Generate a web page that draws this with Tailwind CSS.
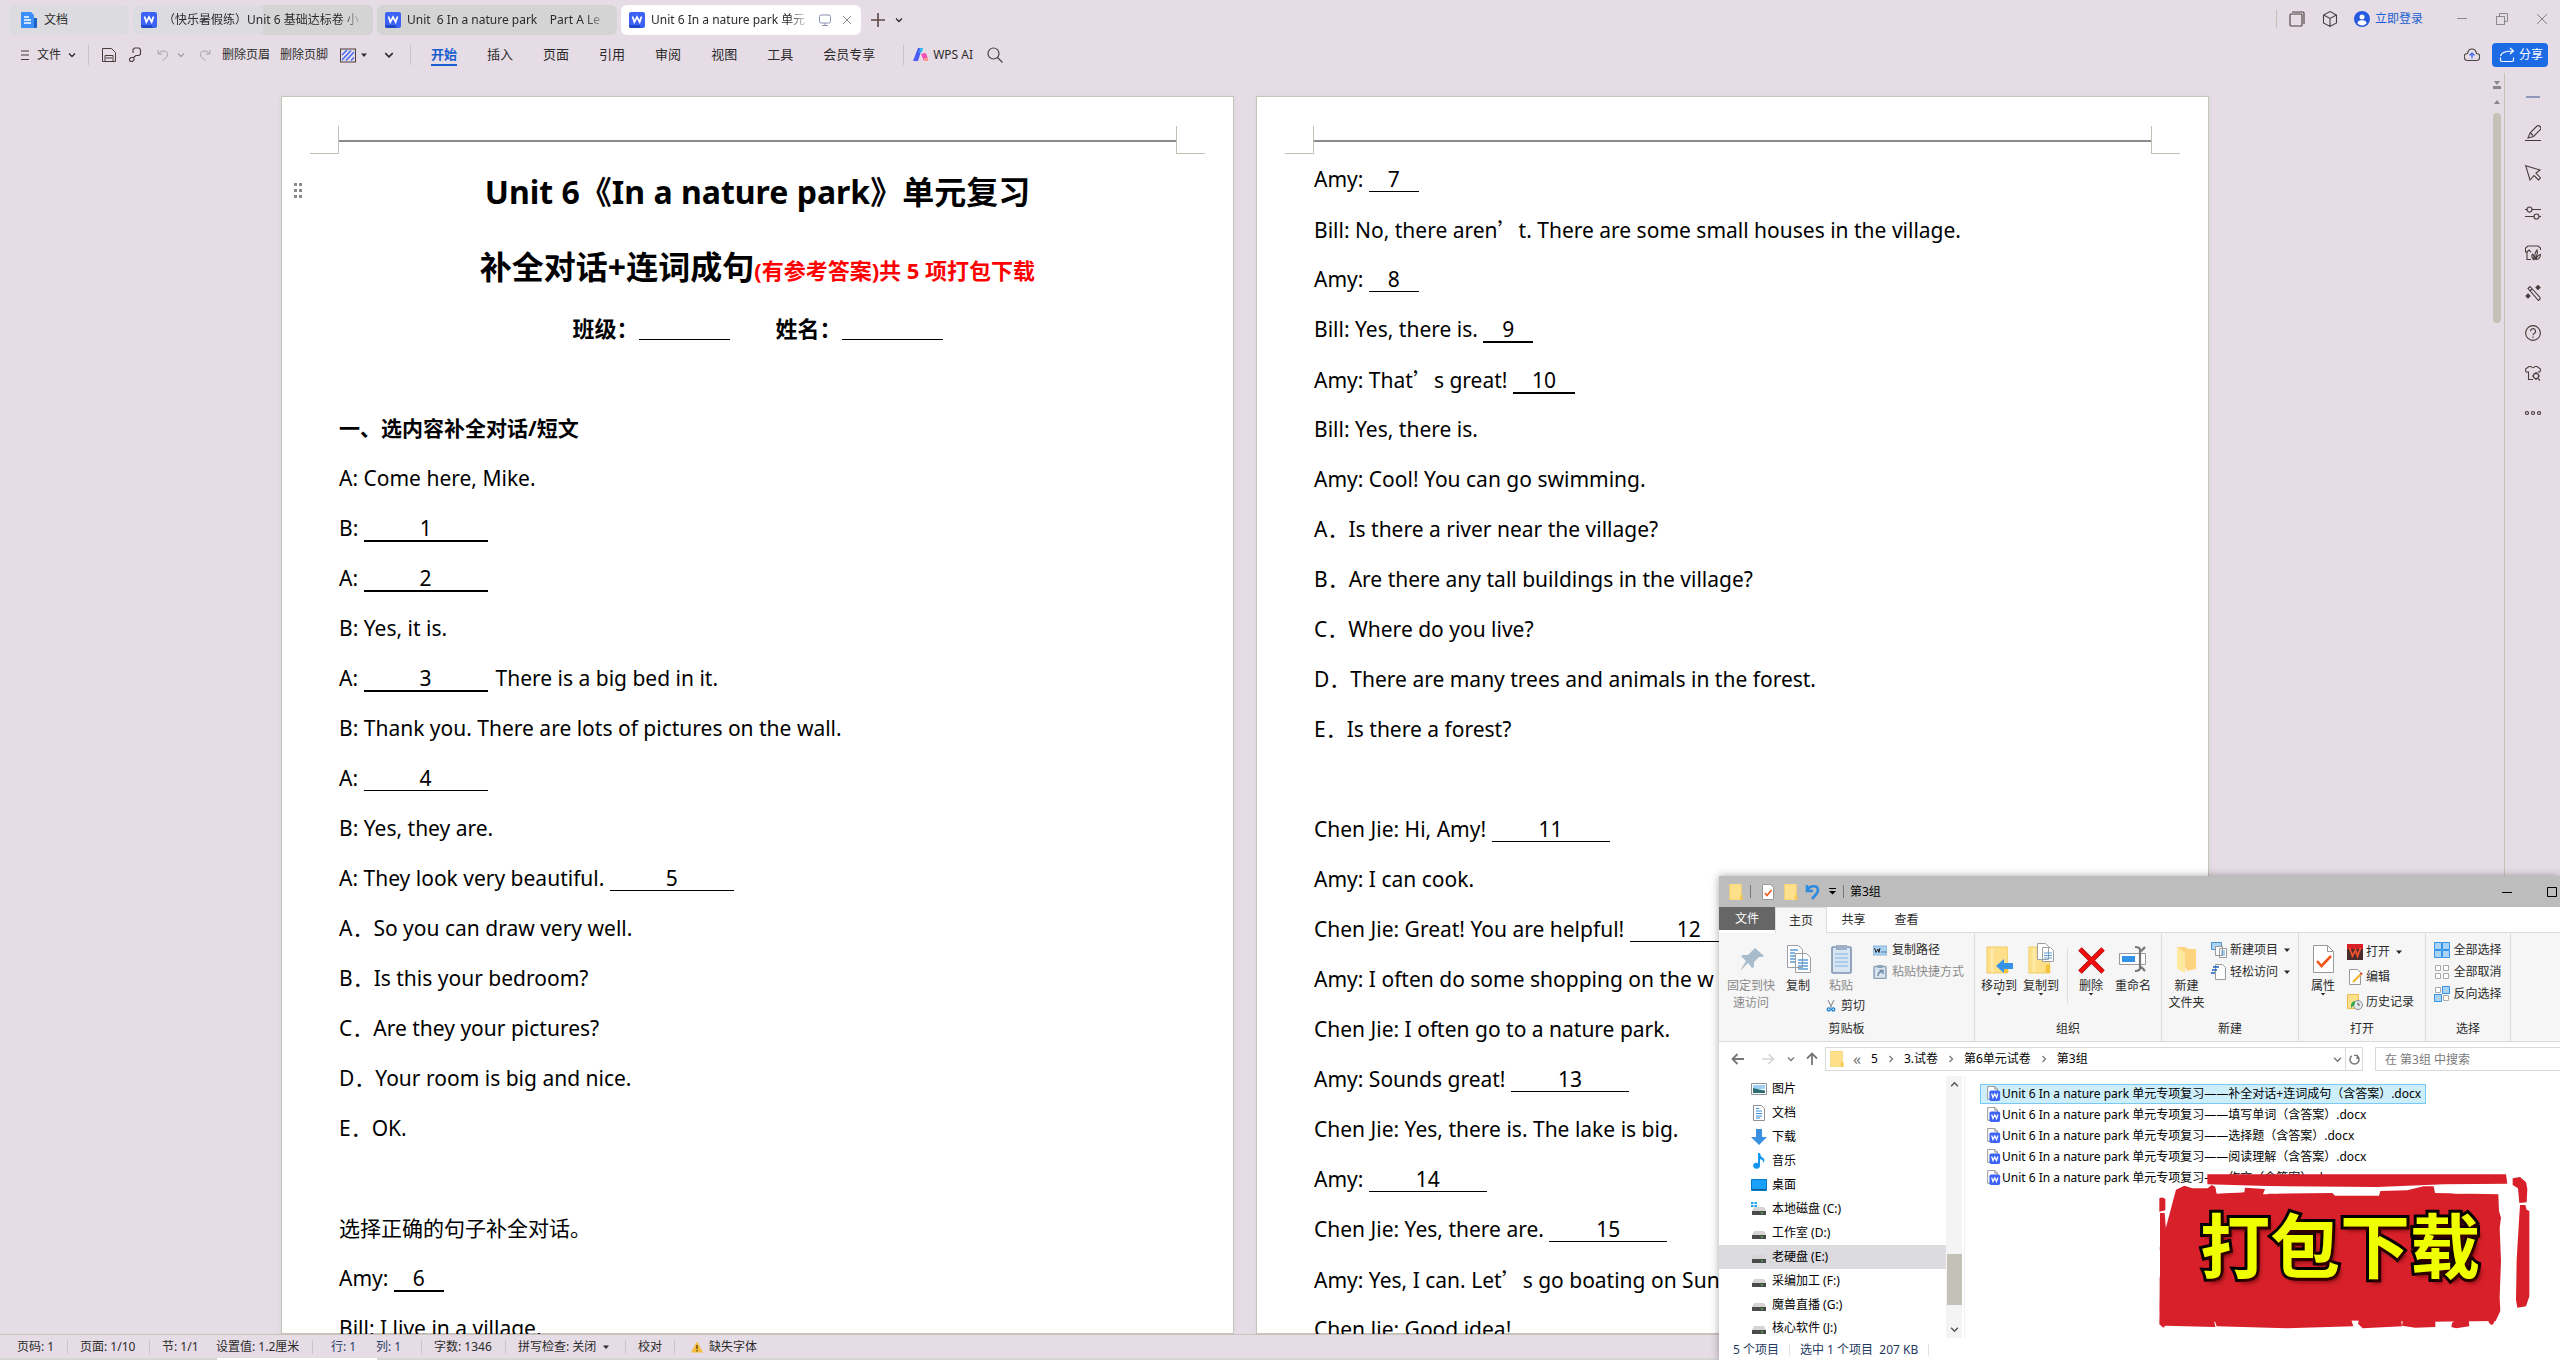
<!DOCTYPE html>
<html lang="zh-CN">
<head>
<meta charset="utf-8">
<title>Unit 6 In a nature park 单元专项复习</title>
<script src="https://cdn.jsdelivr.net/npm/@tailwindcss/browser@4"></script>
</head>
<body class="relative flex h-screen flex-col overflow-hidden bg-[#e6dce5] font-['Noto_Sans','Noto_Sans_CJK_SC',sans-serif] text-xs text-[#2b2b2b]">

<!-- icon sprite -->
<svg class="hidden" aria-hidden="true">
  <symbol id="wdoc" viewBox="0 0 16 16"><path d="M2 0h12a2 2 0 0 1 2 2v12a2 2 0 0 1-2 2H2a2 2 0 0 1-2-2V2a2 2 0 0 1 2-2z" fill="#3c63f5"/><path d="M0 13h10l2 3H2a2 2 0 0 1-2-2z" fill="#1f49c9"/><path d="M3.500 4.500 5.300 10 8 5l2.700 5 1.800-5.500" fill="none" stroke="#fff" stroke-width="1.700"/></symbol>
  <symbol id="chev" viewBox="0 0 8 8"><path d="M1 2.500 4 5.500 7 2.500" fill="none" stroke="currentColor" stroke-width="1.300"/></symbol>
  <symbol id="caret" viewBox="0 0 8 8"><path d="M1 2.500h6L4 6z" fill="currentColor"/></symbol>
  <symbol id="folder" viewBox="0 0 16 16"><path d="M1.500 0h12v16h-12z" fill="#ffe08a" stroke="#f3cd62" stroke-width=".6"/><path d="M12 11h2.500v5H12z" fill="#f6c94c"/></symbol>
  <symbol id="wfile" viewBox="0 0 16 18"><path d="M2 .500h8l3 3V15H2z" fill="#fff" stroke="#8d8d8d"/><path d="M10 .500v3h3" fill="none" stroke="#8d8d8d"/><rect x="4" y="5" width="12" height="12" rx="2" fill="#3c63f5"/><path d="M6.500 8.500 8 13l2-4 2 4 1.500-4.500" fill="none" stroke="#fff" stroke-width="1.400"/></symbol>
  <symbol id="drive" viewBox="0 0 16 16"><path d="M3 6h10l2 4H1z" fill="#d4d4d4"/><path d="M1 10h14v4H1z" fill="#4a4a4a"/><path d="M10 11.500h2v1h-2z" fill="#4fe04f"/></symbol>
  <symbol id="bigfolder" viewBox="0 0 28 30"><path d="M1 1h22v28H1z" fill="#ffe08a" stroke="#f0cb62"/><path d="M5 2h3v26H5z" fill="#ffeaa8"/><path d="M19 20h5v9h-5z" fill="#f5c33f"/></symbol>
</svg>

<!-- tabs -->
<header class="flex h-[38px] shrink-0 items-start pl-[9px] pr-3 pt-[5px]">
  <nav class="flex gap-1" aria-label="打开的文档">
    <button class="flex h-[30px] w-[120px] items-center gap-[7px] rounded-md bg-[#dcdce0] pl-3">
      <svg class="size-4" viewBox="0 0 16 16"><path d="M1 0h9l3 3v13H1a1 1 0 0 1-1-1V1a1 1 0 0 1 1-1z" fill="#3e8ef7"/><path d="M13 6h3v9a1 1 0 0 1-1 1h-2z" fill="#1e63c8"/><path d="M3 5h5M3 8h7M3 11h7" stroke="#fff" stroke-width="1.400"/></svg>文档</button>
    <button class="flex h-[30px] w-[240px] items-center gap-[6px] rounded-md bg-[linear-gradient(90deg,#dcdce0_54%,#d4d4d4_54%)] pl-2 pr-2">
      <svg class="size-4 shrink-0"><use href="#wdoc"/></svg><span class="flex-1 overflow-hidden whitespace-pre text-left [mask-image:linear-gradient(90deg,#000_88%,transparent)]">（快乐暑假练）Unit 6 基础达标卷 小</span></button>
    <button class="flex h-[30px] w-[240px] items-center gap-[6px] rounded-md bg-[#d4d4d4] pl-2 pr-2">
      <svg class="size-4 shrink-0"><use href="#wdoc"/></svg><span class="flex-1 overflow-hidden whitespace-pre text-left [mask-image:linear-gradient(90deg,#000_88%,transparent)]">Unit  6 In a nature park    Part A Le</span></button>
    <button class="flex h-[30px] w-[240px] items-center gap-[6px] rounded-md bg-white pl-2 pr-2">
      <svg class="size-4 shrink-0"><use href="#wdoc"/></svg><span class="w-[160px] overflow-hidden whitespace-pre text-left [mask-image:linear-gradient(90deg,#000_88%,transparent)]">Unit 6 In a nature park 单元</span>
      <svg class="ml-1 size-3 shrink-0" viewBox="0 0 12 12" fill="none" stroke="#8a93b5"><rect x=".5" y="1" width="11" height="8" rx="1.500"/><path d="M6 9v2M3 11.500h6"/></svg>
      <svg class="ml-1 size-3 shrink-0" viewBox="0 0 12 12" stroke="#8a8a8a"><path d="m2 2 8 8M10 2l-8 8"/></svg></button>
  </nav>
  <div class="flex h-[30px] items-center gap-[10px] pl-[10px]">
    <button aria-label="新建标签"><svg class="size-[14px]" viewBox="0 0 14 14" stroke="#5c4747" stroke-width="1.600"><path d="M7 0v14M0 7h14"/></svg></button>
    <button aria-label="标签列表"><svg class="size-2"><use href="#chev"/></svg></button>
  </div>
  <div class="ml-auto flex h-7 items-center">
    <span class="mr-3 h-[18px] w-px bg-[#c4c2b8]"></span>
    <button class="mr-[17px]" aria-label="窗口"><svg class="size-4" viewBox="0 0 16 16" fill="none" stroke="#4a3c3c" stroke-width="1.100"><rect x="1" y="3" width="12" height="12" rx="1"/><path d="M3 1h11a1 1 0 0 1 1 1v11"/></svg></button>
    <button class="mr-4" aria-label="应用"><svg class="size-4" viewBox="0 0 16 16" fill="none" stroke="#444" stroke-width="1.100"><path d="M8 .600 14.500 4v8L8 15.400 1.500 12V4zM2 4.300 8 7.500l6-3.200M8 7.500V15"/></svg></button>
    <button class="mr-[33px] flex items-center gap-[5px] text-[#1c5fd0]"><svg class="size-4" viewBox="0 0 16 16"><circle cx="8" cy="8" r="8" fill="#2459e0"/><circle cx="8" cy="6" r="2.500" fill="#fff"/><path d="M3.500 12.500a4.500 3.200 0 0 1 9 0 6 6 0 0 1-9 0z" fill="#fff"/></svg>立即登录</button>
    <button class="mr-7" aria-label="最小化"><svg class="size-3" viewBox="0 0 12 12" stroke="#8a8a8a"><path d="M1 5.500h10"/></svg></button>
    <button class="mr-7" aria-label="还原"><svg class="size-3" viewBox="0 0 12 12" fill="none" stroke="#8a8a8a"><rect x=".5" y="3.500" width="8" height="8"/><path d="M3.500 3.500v-3h8v8h-3"/></svg></button>
    <button aria-label="关闭"><svg class="size-3" viewBox="0 0 12 12" stroke="#85857a"><path d="m1 1 10 10M11 1 1 11"/></svg></button>
  </div>
</header>

<!-- toolbar -->
<div class="flex h-[34px] shrink-0 items-center pl-5 pr-3">
  <button class="flex items-center gap-[7px]"><svg class="size-[10px]" viewBox="0 0 10 10" stroke="#4a3c3c"><path d="M1 1h8M1 5h8M1 9.500h8"/></svg>文件<svg class="size-2"><use href="#chev"/></svg></button>
  <span class="mx-3 h-5 w-px bg-[#c9c4c8]"></span>
  <button aria-label="保存"><svg class="size-4" viewBox="0 0 16 16" fill="none" stroke="#4a3c3c"><path d="M1.500 1.500h9l4 4v9h-13zM4 14.500v-6h8v6M5 11h6"/></svg></button>
  <button class="ml-[10px]" aria-label="格式刷"><svg class="size-4" viewBox="0 0 16 16" fill="none" stroke="#4a3c3c" stroke-width="1.100"><path d="M6 6V2.500L7.500 1H12l1.500 1.500V7L12 8.500H9L7 10v3l-1.500 1.500h-2L2.500 13.500V12L4 10.500h2.500"/></svg></button>
  <button class="ml-[14px] flex items-center gap-2 text-[#a8a0a8]" aria-label="撤销"><svg class="size-3" viewBox="0 0 12 12" fill="none" stroke="currentColor"><path d="M1 1v4h4M1.500 4.500C4 1 10.500 1 10.500 5.500 10.500 8 8 10 5.500 11.500"/></svg><svg class="size-2"><use href="#chev"/></svg></button>
  <button class="ml-[14px] text-[#a8a0a8]" aria-label="恢复"><svg class="size-3" viewBox="0 0 12 12" fill="none" stroke="currentColor"><path d="M11 1v4H7M10.500 4.500C8 1 1.500 1 1.500 5.500 1.500 8 4 10 6.500 11.500"/></svg></button>
  <button class="ml-[11px]">删除页眉</button>
  <button class="ml-[10px]">删除页脚</button>
  <button class="ml-3 flex items-center gap-1" aria-label="底纹"><svg class="size-4" viewBox="0 0 16 16"><rect x=".5" y="2" width="15" height="13" fill="none" stroke="#4a3c3c"/><path d="M2 8l5-5M2 13 11 3.500M6 13.500 14 5M11 13.500l3-3" stroke="#3c63f5" stroke-width="1.300"/></svg><svg class="size-2"><use href="#caret"/></svg></button>
  <button class="ml-4" aria-label="更多"><svg class="size-[10px]" viewBox="0 0 8 8"><use href="#chev"/></svg></button>
  <span class="ml-4 h-5 w-px bg-[#c9c4c8]"></span>
  <nav class="ml-5 flex gap-[30px] text-[13px] leading-5" aria-label="菜单">
    <button class="border-b-2 border-[#1a5fd0] font-bold text-[#1a5fd0]">开始</button>
    <button class="border-b-2 border-transparent">插入</button>
    <button class="border-b-2 border-transparent">页面</button>
    <button class="border-b-2 border-transparent">引用</button>
    <button class="border-b-2 border-transparent">审阅</button>
    <button class="border-b-2 border-transparent">视图</button>
    <button class="border-b-2 border-transparent">工具</button>
    <button class="border-b-2 border-transparent">会员专享</button>
  </nav>
  <span class="ml-7 h-5 w-px bg-[#c9c4c8]"></span>
  <button class="ml-[9px] flex items-center gap-1"><svg class="size-4" viewBox="0 0 16 16"><path d="M5 1h4L5 14H0z" fill="#4a5cf5"/><path d="M7 1h3l-1 4-3 1z" fill="#2bb8f5"/><path d="m8 7 4-1c2 0 3 8 3 8h-4z" fill="#ee4fb4"/><path d="M11 11h3.500l.5 3h-4z" fill="#ff9a8a"/></svg>WPS AI</button>
  <button class="ml-[14px]" aria-label="搜索"><svg class="size-4" viewBox="0 0 16 16" fill="none" stroke="#4a4444" stroke-width="1.200"><circle cx="6.500" cy="6.500" r="5.500"/><path d="m10.500 10.500 5 5"/></svg></button>
  <button class="ml-auto mr-3" aria-label="云同步"><svg class="size-4" viewBox="0 0 16 16" fill="none" stroke="#444" stroke-width="1.200"><path d="M4 13.500a3.500 3.500 0 0 1-.5-7C4 3.500 6 2 8 2s4 1.500 4.500 4.500a3.500 3.500 0 0 1-.5 7z"/><path d="M8 11.500v-5M5.500 8.500 8 6l2.500 2.500" stroke="#3c63f5"/></svg></button>
  <button class="flex h-6 items-center gap-1 rounded bg-[#1d6ae5] pl-[7px] pr-[5px] text-white"><svg class="size-4" viewBox="0 0 16 16" fill="none" stroke="#fff" stroke-width="1.200"><path d="M1.500 9c1-4 5-5 12-5M11 1l3.500 3L11 7M1.500 10.500V13q0 1.500 1.500 1.500h10q1.500 0 1.500-1.500v-2.500"/></svg>分享</button>
</div>

<!-- workspace -->
<div class="flex min-h-0 flex-1 overflow-hidden">
  <main class="flex min-w-0 flex-1 justify-center gap-[22px] pt-6 text-[21px] leading-[50px] text-black">
    <article class="relative w-[953px] border border-[#c4c4b8] bg-white shadow-[0_0_4px_#d5d5dc]">
      <div class="mx-[28px] flex h-[57px] pt-[29px]">
        <span class="h-[28px] w-[29px] border-b border-r border-[#c0c0b4]"></span>
        <span class="h-[16px] flex-1 border-b-2 border-[#8a8a8a]"></span>
        <span class="h-[28px] w-[29px] border-b border-l border-[#c0c0b4]"></span>
      </div>
      <svg class="absolute left-[12px] top-[86px] h-[15px] w-[9px]" viewBox="0 0 9 15" fill="#8a8a8a"><path d="M0 0h3v3H0zM5 0h3v3H5zM0 6h3v3H0zM5 6h3v3H5zM0 12h3v3H0zM5 12h3v3H5z"/></svg>
      <div class="px-[57px]">
        <h1 class="h-[76px] text-center text-[32px] font-bold leading-[76px]">Unit 6《In a nature park》单元复习</h1>
        <h2 class="h-[73px] text-center text-[32px] font-bold leading-[73px]">补全对话+连词成句<span class="text-[22px] text-[#ff0000]">(有参考答案)共 5 项打包下载</span></h2>
        <p class="flex h-[50px] justify-center text-[22px] font-bold"><span>班级：</span><span class="mt-[36px] h-px w-[91px] bg-black"></span><span class="ml-[46px]">姓名：</span><span class="mt-[36px] h-px w-[101px] bg-black"></span></p>
        <p class="h-[50px]"></p>
        <p class="h-[50px] font-bold">一、选内容补全对话/短文</p>
        <p class="h-[50px]">A: Come here, Mike.</p>
        <p class="h-[50px]">B: <span class="inline-block w-[124px] border-b-2 border-black text-center leading-6">1</span></p>
        <p class="h-[50px]">A: <span class="inline-block w-[124px] border-b-2 border-black text-center leading-6">2</span></p>
        <p class="h-[50px]">B: Yes, it is.</p>
        <p class="h-[50px]">A: <span class="mr-2 inline-block w-[124px] border-b-2 border-black text-center leading-6">3</span>There is a big bed in it.</p>
        <p class="h-[50px]">B: Thank you. There are lots of pictures on the wall.</p>
        <p class="h-[50px]">A: <span class="inline-block w-[124px] border-b border-black text-center leading-6">4</span></p>
        <p class="h-[50px]">B: Yes, they are.</p>
        <p class="h-[50px]">A: They look very beautiful. <span class="inline-block w-[124px] border-b border-black text-center leading-6">5</span></p>
        <p class="h-[50px]">A．So you can draw very well.</p>
        <p class="h-[50px]">B．Is this your bedroom?</p>
        <p class="h-[50px]">C．Are they your pictures?</p>
        <p class="h-[50px]">D．Your room is big and nice.</p>
        <p class="h-[50px]">E．OK.</p>
        <p class="h-[50px]"></p>
        <p class="h-[50px]">选择正确的句子补全对话。</p>
        <p class="h-[50px]">Amy: <span class="inline-block w-[50px] border-b-2 border-black text-center leading-6">6</span></p>
        <p class="h-[50px]">Bill: I live in a village.</p>
      </div>
    </article>
    <article class="w-[953px] border border-[#c4c4b8] bg-white shadow-[0_0_4px_#d5d5dc]">
      <div class="mx-[28px] flex h-[57px] pt-[29px]">
        <span class="h-[28px] w-[29px] border-b border-r border-[#c0c0b4]"></span>
        <span class="h-[16px] flex-1 border-b-2 border-[#8a8a8a]"></span>
        <span class="h-[28px] w-[29px] border-b border-l border-[#c0c0b4]"></span>
      </div>
      <div class="px-[57px]">
        <p class="h-[50px]">Amy: <span class="inline-block w-[50px] border-b border-black text-center leading-6">7</span></p>
        <p class="h-[50px]">Bill: No, there aren<span class="font-['Noto_Sans_CJK_SC',sans-serif]">’</span>t. There are some small houses in the village.</p>
        <p class="h-[50px]">Amy: <span class="inline-block w-[50px] border-b border-black text-center leading-6">8</span></p>
        <p class="h-[50px]">Bill: Yes, there is. <span class="inline-block w-[50px] border-b-2 border-black text-center leading-6">9</span></p>
        <p class="h-[50px]">Amy: That<span class="font-['Noto_Sans_CJK_SC',sans-serif]">’</span>s great! <span class="inline-block w-[62px] border-b-2 border-black text-center leading-6">10</span></p>
        <p class="h-[50px]">Bill: Yes, there is.</p>
        <p class="h-[50px]">Amy: Cool! You can go swimming.</p>
        <p class="h-[50px]">A．Is there a river near the village?</p>
        <p class="h-[50px]">B．Are there any tall buildings in the village?</p>
        <p class="h-[50px]">C．Where do you live?</p>
        <p class="h-[50px]">D．There are many trees and animals in the forest.</p>
        <p class="h-[50px]">E．Is there a forest?</p>
        <p class="h-[50px]"></p>
        <p class="h-[50px]">Chen Jie: Hi, Amy! <span class="inline-block w-[118px] border-b border-black text-center leading-6">11</span></p>
        <p class="h-[50px]">Amy: I can cook.</p>
        <p class="h-[50px]">Chen Jie: Great! You are helpful! <span class="inline-block w-[118px] border-b border-black text-center leading-6">12</span></p>
        <p class="h-[50px]">Amy: I often do some shopping on the w</p>
        <p class="h-[50px]">Chen Jie: I often go to a nature park.</p>
        <p class="h-[50px]">Amy: Sounds great! <span class="inline-block w-[118px] border-b border-black text-center leading-6">13</span></p>
        <p class="h-[50px]">Chen Jie: Yes, there is. The lake is big.</p>
        <p class="h-[50px]">Amy: <span class="inline-block w-[118px] border-b border-black text-center leading-6">14</span></p>
        <p class="h-[50px]">Chen Jie: Yes, there are. <span class="inline-block w-[118px] border-b border-black text-center leading-6">15</span></p>
        <p class="h-[50px]">Amy: Yes, I can. Let<span class="font-['Noto_Sans_CJK_SC',sans-serif]">’</span>s go boating on Sun</p>
        <p class="h-[50px]">Chen Jie: Good idea!</p>
      </div>
    </article>
  </main>

  <div class="flex w-[14px] flex-col items-center pt-[9px]">
    <svg class="h-2 w-2" viewBox="0 0 8 8" fill="#888"><path d="M1 0h6L4 4zM0 5h8v3H0z"/></svg>
    <svg class="mt-[9px] h-2 w-2" viewBox="0 0 8 8" fill="#888"><path d="M4 2l3 4H1z"/></svg>
    <span class="mt-[7px] h-[210px] w-2 rounded-full bg-[#c4c2b8]"></span>
  </div>
  <aside class="mt-[1px] flex w-14 flex-col items-center gap-6 border-l border-[#c4c2b8] pt-5 text-[#4a3c3c]">
    <button class="h-2" aria-label="收起"><svg class="h-2 w-4" viewBox="0 0 16 8"><path d="M1 4h14" stroke="#8f98b8" stroke-width="2"/></svg></button>
    <button aria-label="批注"><svg class="size-4" viewBox="0 0 16 16" fill="none" stroke="currentColor" stroke-width="1.100"><path d="M0 15.500h16M3 13l2-5 7-7q1.500-1 3 .5t.5 3l-7 7L3 13zM5.500 8 8 10.500"/></svg></button>
    <button aria-label="选择"><svg class="size-4" viewBox="0 0 16 16" fill="none" stroke="currentColor" stroke-width="1.100"><path d="M.700.700 15 5l-4 3 4.500 5-2 2L9 10.500 5 15z"/></svg></button>
    <button aria-label="属性"><svg class="size-4" viewBox="0 0 16 16" fill="none" stroke="currentColor" stroke-width="1.200"><path d="M0 4.500h2M7 4.500h9M0 11.500h9M14 11.500h2"/><circle cx="4.500" cy="4.500" r="2.500"/><circle cx="11.500" cy="11.500" r="2.500"/></svg></button>
    <button aria-label="素材"><svg class="size-4" viewBox="0 0 16 16" fill="none" stroke="currentColor" stroke-width="1.100"><path d="M15.500 5V3L13 1H3L.500 3v4H2v7.500h4M2 7l2-2 2 2M8.500 14.500c-2-2-2-4-1-5.500 1.500 1.500 2 3 1 5.500zM10 14c-.5-4 0-7 2-9 1 3 0 6-2 9zM11 14.500c1-3 2.500-4.500 4.500-5 0 3-2 5-4.500 5z"/></svg></button>
    <button aria-label="美化"><svg class="size-4" viewBox="0 0 16 16" fill="none" stroke="currentColor" stroke-width="1.100"><path d="M3 3.500 5 1.500 15 12.500v1.500L13.500 15.500zM5 6l2-2"/><path d="m13 .500 2 2-2 2-2-2zM3 9l2 2-2 2-2-2z" fill="currentColor"/></svg></button>
    <button aria-label="帮助"><svg class="size-4" viewBox="0 0 16 16" fill="none" stroke="currentColor" stroke-width="1.100"><circle cx="8" cy="8" r="7.400"/><path d="M5.500 6.200a2.500 2.500 0 1 1 3.600 2.200Q8 9 8 10.300M8 11.500v1.500"/></svg></button>
    <button aria-label="皮肤"><svg class="size-4" viewBox="0 0 16 16" fill="none" stroke="currentColor" stroke-width="1.100"><path d="M8 14.500H3.500V7H1L.500 4 4 1.500h2q2 2.500 4 0h2L15.500 4 15 7h-2.500M15 15.500l-2-2"/><circle cx="11" cy="11" r="2.600"/><path d="M11 7v2M7 11h2M13 11h2M11 13v2"/></svg></button>
    <button aria-label="更多"><svg class="size-4" viewBox="0 0 16 16" fill="none" stroke="currentColor" stroke-width="1.200"><circle cx="2" cy="8" r="1.500"/><circle cx="8" cy="8" r="1.500"/><circle cx="14" cy="8" r="1.500"/></svg></button>
  </aside>
</div>

<!-- status bar -->
<footer class="flex h-[26px] shrink-0 flex-col">
  <div class="flex flex-1 items-center border-t border-[#c9c2bc] pl-[17px]">
    <span class="w-[50px]">页码: 1</span><span class="mr-3 h-[14px] w-px bg-[#c9c4c8]"></span>
    <span class="w-[69px]">页面: 1/10</span><span class="mr-3 h-[14px] w-px bg-[#c9c4c8]"></span>
    <span class="w-[54px]">节: 1/1</span><span class="w-[96px]">设置值: 1.2厘米</span><span class="mr-[18px] h-[14px] w-px bg-[#c9c4c8]"></span>
    <span class="w-[45px] text-[#2a3f66]">行: 1</span><span class="w-[45px] text-[#2a3f66]">列: 1</span><span class="mr-3 h-[14px] w-px bg-[#c9c4c8]"></span>
    <span class="w-[71px]">字数: 1346</span><span class="mr-3 h-[14px] w-px bg-[#c9c4c8]"></span>
    <button class="flex w-[107px] items-center gap-[6px]">拼写检查: 关闭<svg class="size-2"><use href="#caret"/></svg></button><span class="mr-3 h-[14px] w-px bg-[#c9c4c8]"></span>
    <button class="w-9 text-left">校对</button><span class="mr-4 h-[14px] w-px bg-[#c9c4c8]"></span>
    <button class="flex items-center gap-[6px]"><svg class="size-3" viewBox="0 0 12 12"><path d="M6 .500 12 11.500H0z" fill="#f5bd3a"/><path d="M6 4v4M6 9v1.500" stroke="#5a3c10" stroke-width="1.300"/></svg>缺失字体</button>
  </div>
  <div class="flex h-[2px] bg-[#d5d5d5] pl-[217px]"><span class="w-[160px] bg-white"></span></div>
</footer>

<!-- explorer window -->
<section class="absolute bottom-0 right-0 flex h-[484px] w-[841px] flex-col bg-white text-[#2b2b2b] shadow-[0_0_8px_rgba(0,0,0,0.35)]" aria-label="第3组">
  <div class="flex h-[31px] shrink-0 items-center bg-[#bdbdbd] pl-[9px] text-black">
    <svg class="size-4"><use href="#folder"/></svg>
    <span class="ml-[6px] h-[13px] w-px bg-[#777]"></span>
    <svg class="ml-[11px] h-4 w-3" viewBox="0 0 12 16"><path d="M.500.500h8l3 3v12H.500z" fill="#fff" stroke="#999"/><path d="m3 9 2 2.500L9.500 6" fill="none" stroke="#f0581e" stroke-width="1.600"/></svg>
    <svg class="ml-[9px] size-4"><use href="#folder"/></svg>
    <svg class="ml-[6px] size-4" viewBox="0 0 16 16" fill="none" stroke="#2f8be0" stroke-width="2.600"><path d="M2 1v6h6M2.500 6C5 1 13 1 13 6c0 4-4 6-6 9"/></svg>
    <svg class="ml-[7px] size-[9px]" viewBox="0 0 9 9"><path d="M1 1.500h7" stroke="#000"/><path d="M1 4h7L4.500 7.500z"/></svg>
    <span class="ml-[6px] h-[13px] w-px bg-[#777]"></span>
    <span class="ml-[6px]">第3组</span>
    <button class="ml-auto mr-[35px]" aria-label="最小化"><svg class="size-[10px]" viewBox="0 0 10 10" stroke="#000"><path d="M0 5.500h10"/></svg></button>
    <button class="mr-[3px]" aria-label="最大化"><svg class="size-[10px]" viewBox="0 0 10 10" fill="none" stroke="#000"><path d="M.500.500h9v9h-9z"/></svg></button>
  </div>
  <div class="flex h-[26px] shrink-0 items-stretch">
    <button class="mb-[3px] w-14 bg-[#666] text-white">文件</button>
    <button class="w-[52px] border-x border-t border-[#dcdcdf] bg-[#f6f6f6]">主页</button>
    <button class="w-[53px] border-b border-[#dcdcdf]">共享</button>
    <button class="w-[53px] border-b border-[#dcdcdf]">查看</button>
    <span class="flex-1 border-b border-[#dcdcdf]"></span>
  </div>
  <div class="flex h-[109px] shrink-0 border-b border-[#dcdcdf] bg-[#f6f6f6] leading-[17px]">
    <!-- clipboard -->
    <div class="flex w-[256px] flex-col items-center justify-between border-r border-[#dfdadf] py-1">
      <div class="flex w-full pt-1">
        <button class="ml-[6px] flex w-[52px] flex-col items-center text-[#8a8a8a]"><svg class="size-9" viewBox="0 0 36 36"><path d="M22 7 31 15l-2 1-3 0-5 5v5l-2 1-4-5-8 8 6-10-5-5 2-1 5 0 5-5z" fill="#a9bccb"/></svg>固定到快<br>速访问</button>
        <button class="flex w-[42px] flex-col items-center"><svg class="size-9" viewBox="0 0 36 36"><g fill="#fff" stroke="#9aa0a6"><path d="M7.500 4.500h11l4 4v18h-15zM15.500 12.500h11l4 4v15h-15z"/></g><path d="M10 9h8M10 12h5M10 15h5M10 18h5M10 21h5M18 19h10M18 22h10M18 25h10M18 28h10" stroke="#5b9bd5" stroke-width="1.300"/></svg>复制</button>
        <div class="flex w-[44px] flex-col items-center">
          <button class="flex flex-col items-center text-[#8a8a8a]"><svg class="size-9" viewBox="0 0 36 36"><rect x="9" y="6" width="19" height="26" rx="1" fill="#d8e6f3" stroke="#7d93b0" stroke-width="1.600"/><path d="M13 4h11v5H13z" fill="#9eb0c6"/><path d="M12 13h13M12 17h13M12 21h13M12 25h13" stroke="#9fc3ea" stroke-width="1.500"/></svg>粘贴</button>
          <button class="ml-2 mt-[3px] flex items-center gap-1 whitespace-nowrap"><svg class="size-3 shrink-0" viewBox="0 0 12 16"><path d="m2 0 5 10M10 0 5 10" stroke="#8a8f96" stroke-width="1.400"/><g fill="none" stroke="#1c80d0" stroke-width="1.800"><circle cx="3" cy="12.500" r="2"/><circle cx="9" cy="12.500" r="2"/></g></svg>剪切</button>
        </div>
        <div class="ml-[10px] flex flex-col gap-[5px]">
          <button class="flex items-center gap-[5px]"><svg class="size-[14px]" viewBox="0 0 14 14"><path d="M0 3h14v9H0z" fill="#a9d3f7" stroke="#7ea8cc" stroke-width=".8"/><path d="m1.500 5 1.500 4.500L5 6l1 3.500L7 5M8.500 9h1M10.500 9h1M12.300 9h1" stroke="#222" fill="none"/></svg>复制路径</button>
          <button class="flex items-center gap-[5px] text-[#8a8a8a]"><svg class="size-[14px]" viewBox="0 0 14 14"><rect x="1" y="1.500" width="12" height="12" rx="1" fill="#d7e4ef" stroke="#8aa2b8" stroke-width="1.500"/><path d="M4.500 0h5v3h-5z" fill="#8aa2b8"/><path d="M5 11q0-4 4-4.500M6.500 5.500H10v3.500" fill="none" stroke="#6d89a5" stroke-width="1.300"/></svg>粘贴快捷方式</button>
        </div>
      </div>
      <span>剪贴板</span>
    </div>
    <!-- organise -->
    <div class="flex w-[187px] flex-col items-center justify-between border-r border-[#dfdadf] py-1">
      <div class="flex w-full pt-1">
        <button class="ml-[3px] flex w-[42px] flex-col items-center"><svg class="size-9" viewBox="0 0 36 36"><svg x="5" y="4" width="26" height="30"><use href="#bigfolder"/></svg><path d="m15 25 8-7v4h9v6h-9v4z" fill="#3393e8"/></svg>移动到<svg class="-mt-[3px] size-[6px]"><use href="#caret" width="6" height="6"/></svg></button>
        <button class="flex w-[42px] flex-col items-center"><svg class="size-9" viewBox="0 0 36 36"><svg x="5" y="4" width="26" height="30"><use href="#bigfolder"/></svg><g fill="#fff" stroke="#9aa0a6"><path d="M14.500 2.500h8l3 3v13h-11zM19.500 6.500h8l3 3v11h-11z"/></g><path d="M21 12h8M21 14.500h8M21 17h8" stroke="#5b9bd5"/></svg>复制到<svg class="-mt-[3px] size-[6px]"><use href="#caret" width="6" height="6"/></svg></button>
        <span class="ml-[5px] mr-[2px] mt-2 h-[54px] w-px bg-[#dfdadf]"></span>
        <button class="flex w-[42px] flex-col items-center"><svg class="size-9" viewBox="0 0 36 36"><path d="m7 8 23 23M30 8 7 31" stroke="#a01414" stroke-width="5"/><path d="m7 8 23 23M30 8 7 31" stroke="#f20d0d" stroke-width="3.600"/></svg>删除<svg class="-mt-[3px] size-[6px]"><use href="#caret" width="6" height="6"/></svg></button>
        <button class="flex w-[42px] flex-col items-center"><svg class="size-9" viewBox="0 0 36 36"><path d="M4.500 12.500h26v11h-26z" fill="#fff" stroke="#999"/><path d="M7 15h13v6H7z" fill="#3393e8"/><path d="M20 6q5 0 5 3t5-3M25 8v20M20 30q5 0 5-3t5 3" fill="none" stroke="#777" stroke-width="2.200"/></svg>重命名</button>
      </div>
      <span>组织</span>
    </div>
    <!-- new -->
    <div class="flex w-[137px] flex-col items-center justify-between border-r border-[#dfdadf] py-1">
      <div class="flex w-full pt-1">
        <button class="ml-[4px] flex w-[41px] flex-col items-center"><svg class="size-9" viewBox="0 0 36 36"><path d="M8 6h8l3 2h8v20l-9 2z" fill="#ffd480"/><path d="M8 6 16 12v20l-8-4z" fill="#ffe9a0"/></svg>新建<br>文件夹</button>
        <div class="ml-[4px] flex flex-col gap-[5px]">
          <button class="flex items-center gap-[3px]"><svg class="size-4" viewBox="0 0 16 16"><path d="M.500.500h10v7H.500z" fill="#a9d3f7" stroke="#4a90c8"/><path d="M4.500 4.500h7v9h-7zM8.500 6.500h7v9h-7z" fill="#fff" stroke="#999"/><path d="M10 9h4M10 11h4M10 13h4" stroke="#5b9bd5"/></svg>新建项目<svg class="ml-[2px] size-2"><use href="#caret"/></svg></button>
          <button class="flex items-center gap-[3px]"><svg class="size-4" viewBox="0 0 16 16"><path d="M4.500.500h7l3 3v12h-10z" fill="#fff" stroke="#999"/><path d="M2 3h6M1 6h5M0 9h4" stroke="#1463c0" stroke-width="1.400"/></svg>轻松访问<svg class="ml-[2px] size-2"><use href="#caret"/></svg></button>
        </div>
      </div>
      <span>新建</span>
    </div>
    <!-- open -->
    <div class="flex w-[127px] flex-col items-center justify-between border-r border-[#dfdadf] py-1">
      <div class="flex w-full pt-1">
        <button class="ml-[3px] flex w-[42px] flex-col items-center"><svg class="size-9" viewBox="0 0 36 36"><path d="M8.500 4.500h14l6 6v21h-20z" fill="#fff" stroke="#999"/><path d="M22.500 4.500v6h6" fill="none" stroke="#999"/><path d="m12 20 4.500 5L26 15" fill="none" stroke="#f0581e" stroke-width="2.600"/></svg>属性<svg class="-mt-[3px] size-[6px]"><use href="#caret" width="6" height="6"/></svg></button>
        <div class="ml-[3px] flex flex-col gap-2 pt-[2px]">
          <button class="flex items-center gap-[3px]"><svg class="size-4" viewBox="0 0 16 16"><path d="M0 0h16v16H0z" fill="#4a2b2e"/><path d="M0 0h16v5H0z" fill="#d81f26"/><path d="m2.500 4 3 8 3-6 2 6 3-8" fill="none" stroke="#f0502a" stroke-width="1.800"/></svg>打开<svg class="ml-[2px] size-2"><use href="#caret"/></svg></button>
          <button class="flex items-center gap-[3px]"><svg class="size-4" viewBox="0 0 16 16"><path d="M2.500.500h8l3 3v12h-11z" fill="#fff" stroke="#999"/><path d="m6 13 8-8" stroke="#efb52e" stroke-width="2.200"/><path d="m13.500 5.500 1.500-1.500" stroke="#d84a3a" stroke-width="2.200"/></svg>编辑</button>
          <button class="flex items-center gap-[3px]"><svg class="size-4" viewBox="0 0 16 16"><path d="M.500.500h11v14H.500z" fill="#ffe08a" stroke="#e9bd55"/><circle cx="11" cy="11" r="4.500" fill="#e6e9ec" stroke="#8a8f96"/><path d="M11 8.500V11h2" stroke="#555" fill="none"/><path d="M4 14q-1-6 4-7l0 3z" fill="#2fa84f"/></svg>历史记录</button>
        </div>
      </div>
      <span>打开</span>
    </div>
    <!-- select -->
    <div class="flex w-[85px] flex-col items-center justify-between border-r border-[#dfdadf] py-1">
      <div class="flex flex-col gap-[5px] pt-1">
        <button class="flex items-center gap-[3px]"><svg class="size-4" viewBox="0 0 16 16" fill="#a9d3f7" stroke="#3393e8"><path d="M.500.500h7v7h-7zM8.500.500h7v7h-7zM.500 8.500h7v7h-7zM8.500 8.500h7v7h-7z"/></svg>全部选择</button>
        <button class="flex items-center gap-[3px]"><svg class="size-4" viewBox="0 0 16 16" fill="#fff" stroke="#aaa"><path d="M1.500 1.500h5v5h-5zM9.500 1.500h5v5h-5zM1.500 9.500h5v5h-5zM9.500 9.500h5v5h-5z"/></svg>全部取消</button>
        <button class="flex items-center gap-[3px]"><svg class="size-4" viewBox="0 0 16 16"><path d="M1.500 1.500h5v5h-5zM9.500 9.500h5v5h-5z" fill="#fff" stroke="#aaa"/><path d="M8.500.500h7v7h-7zM.500 8.500h7v7h-7z" fill="#a9d3f7" stroke="#3393e8"/></svg>反向选择</button>
      </div>
      <span>选择</span>
    </div>
  </div>
  <!-- address bar -->
  <div class="flex h-[34px] shrink-0 items-center text-black">
    <button class="ml-[12px] text-[#777]" aria-label="后退"><svg class="size-[14px]" viewBox="0 0 14 14" fill="none" stroke="currentColor" stroke-width="1.800"><path d="M13 7H2M6.500 2 1.500 7l5 5"/></svg></button>
    <button class="ml-4 text-[#d5d5da]" aria-label="前进"><svg class="size-[14px]" viewBox="0 0 14 14" fill="none" stroke="currentColor" stroke-width="1.600"><path d="M1 7h11M7.500 2l5 5-5 5"/></svg></button>
    <button class="ml-3 text-[#777]" aria-label="最近"><svg class="size-2"><use href="#chev"/></svg></button>
    <button class="ml-[10px] text-[#777]" aria-label="上移"><svg class="size-[14px]" viewBox="0 0 14 14" fill="none" stroke="currentColor" stroke-width="1.800"><path d="M7 13V2M2 6.500l5-5 5 5"/></svg></button>
    <nav class="ml-1.5 flex h-6 w-[538px] items-center border border-[#d9d9d9] pl-[3px]" aria-label="路径">
      <svg class="size-4"><use href="#folder"/></svg>
      <span class="ml-1.5 w-3 text-center text-base leading-none text-[#777]">«</span>
      <button class="ml-2">5</button><svg class="ml-[9px] size-2 -rotate-90 text-[#777]"><use href="#chev"/></svg>
      <button class="ml-[9px]">3.试卷</button><svg class="ml-[9px] size-2 -rotate-90 text-[#777]"><use href="#chev"/></svg>
      <button class="ml-[9px]">第6单元试卷</button><svg class="ml-[9px] size-2 -rotate-90 text-[#777]"><use href="#chev"/></svg>
      <button class="ml-[9px]">第3组</button>
      <button class="ml-auto mr-[3px] text-[#777]" aria-label="展开"><svg class="size-[9px]" viewBox="0 0 8 8"><use href="#chev"/></svg></button>
      <button class="flex h-full w-[17px] items-center justify-center border-l border-[#d9d9d9] text-[#777]" aria-label="刷新"><svg class="size-[11px]" viewBox="0 0 12 12" fill="none" stroke="currentColor" stroke-width="1.600"><path d="M3 2a5 5 0 1 0 6 0M9 5.500V1.500H5.500"/></svg></button>
    </nav>
    <input class="ml-3 h-6 min-w-0 flex-1 border border-r-0 border-[#d9d9d9] bg-white pl-[9px] placeholder:text-[#7a7a7a]" aria-label="搜索" placeholder="在 第3组 中搜索">
  </div>
  <div class="flex min-h-0 flex-1 text-black">
    <ul class="flex h-[263px] w-[227px] flex-col overflow-hidden pt-px leading-6">
      <li class="flex h-6 shrink-0 items-center gap-[5px] pl-8"><svg class="size-4" viewBox="0 0 16 16"><path d="M.500 2.500h15v11H.500z" fill="#fff" stroke="#8a9199"/><path d="M2 4h12v4H2z" fill="#9ed0f5"/><path d="M2 7q5 1 12 2.500V12H2z" fill="#2f6f74"/></svg>图片</li>
      <li class="flex h-6 shrink-0 items-center gap-[5px] pl-8"><svg class="size-4" viewBox="0 0 16 16"><path d="M2.500.500h8l3 3v12h-11z" fill="#fff" stroke="#8a9199"/><path d="M5 6h6M5 8.500h6M5 11h6M5 13h4M5 3.500h3" stroke="#2f8be0"/></svg>文档</li>
      <li class="flex h-6 shrink-0 items-center gap-[5px] pl-8"><svg class="size-4" viewBox="0 0 16 16"><path d="M5 0h6v8h5l-8 8-8-8h5z" fill="#3a90e0"/></svg>下载</li>
      <li class="flex h-6 shrink-0 items-center gap-[5px] pl-8"><svg class="size-4" viewBox="0 0 16 16"><path d="M7 0h2q0 3 3 5t0 5q1-3-3-4v6a3.500 3 0 1 1-2-2z" fill="#1295f0"/></svg>音乐</li>
      <li class="flex h-6 shrink-0 items-center gap-[5px] pl-8"><svg class="size-4" viewBox="0 0 16 16"><path d="M.500 2.500h15v11H.500z" fill="#18a0fb" stroke="#0c77c2"/><path d="M1 12.500h14" stroke="#0c5fa0"/></svg>桌面</li>
      <li class="flex h-6 shrink-0 items-center gap-[5px] pl-8"><svg class="size-4" viewBox="0 0 16 16"><use href="#drive"/><path d="M0 1h2.500v2H0zM3.500 1H6v2H3.500zM0 4h2.500v2H0zM3.500 4H6v2H3.500z" fill="#18a0fb"/></svg>本地磁盘 (C:)</li>
      <li class="flex h-6 shrink-0 items-center gap-[5px] pl-8"><svg class="size-4"><use href="#drive"/></svg>工作室 (D:)</li>
      <li class="flex h-6 shrink-0 items-center gap-[5px] bg-[#dcdbe0] pl-8"><svg class="size-4"><use href="#drive"/></svg>老硬盘 (E:)</li>
      <li class="flex h-6 shrink-0 items-center gap-[5px] pl-8"><svg class="size-4"><use href="#drive"/></svg>采编加工 (F:)</li>
      <li class="flex h-6 shrink-0 items-center gap-[5px] pl-8"><svg class="size-4"><use href="#drive"/></svg>魔兽直播 (G:)</li>
      <li class="flex h-[22px] shrink-0 items-center gap-[5px] pl-8"><svg class="size-4"><use href="#drive"/></svg>核心软件 (J:)</li>
    </ul>
    <div class="flex h-[262px] w-4 flex-col items-center bg-[#f4f4f4] py-1 text-[#555]">
      <svg class="size-[9px] rotate-180" viewBox="0 0 8 8"><use href="#chev"/></svg>
      <span class="mt-[165px] h-[51px] w-[15px] bg-[#c4c2b8]"></span>
      <svg class="mt-auto size-[9px]" viewBox="0 0 8 8"><use href="#chev"/></svg>
    </div>
    <ul class="ml-[2px] flex h-[263px] flex-1 flex-col items-start gap-px border-l border-[#f0f0f0] pl-[15px] pt-2">
      <li class="flex h-5 items-center gap-px border border-[#7cc8f5] bg-[#cdeefb] pl-1 pr-1"><svg class="h-4 w-4"><use href="#wfile"/></svg>Unit 6 In a nature park 单元专项复习——补全对话+连词成句（含答案）.docx</li>
      <li class="flex h-5 items-center gap-px pl-[5px]"><svg class="h-4 w-4"><use href="#wfile"/></svg>Unit 6 In a nature park 单元专项复习——填写单词（含答案）.docx</li>
      <li class="flex h-5 items-center gap-px pl-[5px]"><svg class="h-4 w-4"><use href="#wfile"/></svg>Unit 6 In a nature park 单元专项复习——选择题（含答案）.docx</li>
      <li class="flex h-5 items-center gap-px pl-[5px]"><svg class="h-4 w-4"><use href="#wfile"/></svg>Unit 6 In a nature park 单元专项复习——阅读理解（含答案）.docx</li>
      <li class="flex h-5 items-center gap-px pl-[5px]"><svg class="h-4 w-4"><use href="#wfile"/></svg>Unit 6 In a nature park 单元专项复习——作文（含答案）.docx</li>
    </ul>
  </div>
  <div class="flex h-[21px] shrink-0 items-center pl-[14px] text-[#1f3a5f]"><span class="w-[56px]">5 个项目</span><span class="mr-[10px] h-3 w-px bg-[#e2e2e2]"></span><span>选中 1 个项目&nbsp; 207 KB</span><span class="ml-[10px] h-3 w-px bg-[#e2e2e2]"></span></div>

  <!-- stamp -->
  <div class="absolute bottom-[30px] right-[30px] flex h-[157px] w-[372px] items-center justify-center">
    <svg class="absolute inset-0 size-full" viewBox="84 370 1116 471" fill="#d8202a">
      <path d="M232 374l896 0 4 28-190 2-200 8-330-3-180-5z"/>
      <path d="M138 420l25-12 24 8 46 0 12-10 12 6 4 18 82-2 2-14 60 4-6 16 14 0 6-12 16 4 0 6 172-2 8 8 132 0 4-14 80-2 50-12 30 0 4 20 190 4 2 50 6 20-4 30 4 100-4 110 2 40-14 30-200 2-300-4-300 4-200-2-8-30 0-100 6-30-6-60 8-20z"/>
      <path d="M88 446q10-6 18 2l0 34-18 4zM90 490l14 0 4 50 6 100 6 60 2 64 24 22 60 18 46 6 4 22-150-4-6 6-12-10 2-100z"/>
      <path d="M252 806l130-4 280 2 8 26-200 6-210-6zM688 806l124-2 4 26-118 6-14-14zM820 804l20-10 30 10 46 2 0 26-60 2-40-6zM966 820l20-16 30 2 2 24-40 6-14-4zM1072 800q14-10 24 4-2 18-12 22-12-8-12-26z"/>
      <path d="M1148 386l22-4 18 16 4 20-2 40-22 2-4-44-16-10zM1170 466l16 0 4 14 8 4 0 256-10 30-26 4-4-24 2-120 6-100z"/>
      <path d="M256 412l86-2-4 18-78 4zM414 416l22-2 2 18-26 0zM942 410l186-6 0 24-150 4-40-6z" fill="#fff"/>
    </svg>
    <strong class="relative -mt-3 mr-2 whitespace-nowrap text-[70px] leading-none font-bold text-[#f0ff00] [-webkit-text-stroke:6px_#000] [paint-order:stroke_fill] [text-shadow:3px_4px_4px_rgba(80,0,0,0.7)]">打包下载</strong>
  </div>
</section>
</body>
</html>
